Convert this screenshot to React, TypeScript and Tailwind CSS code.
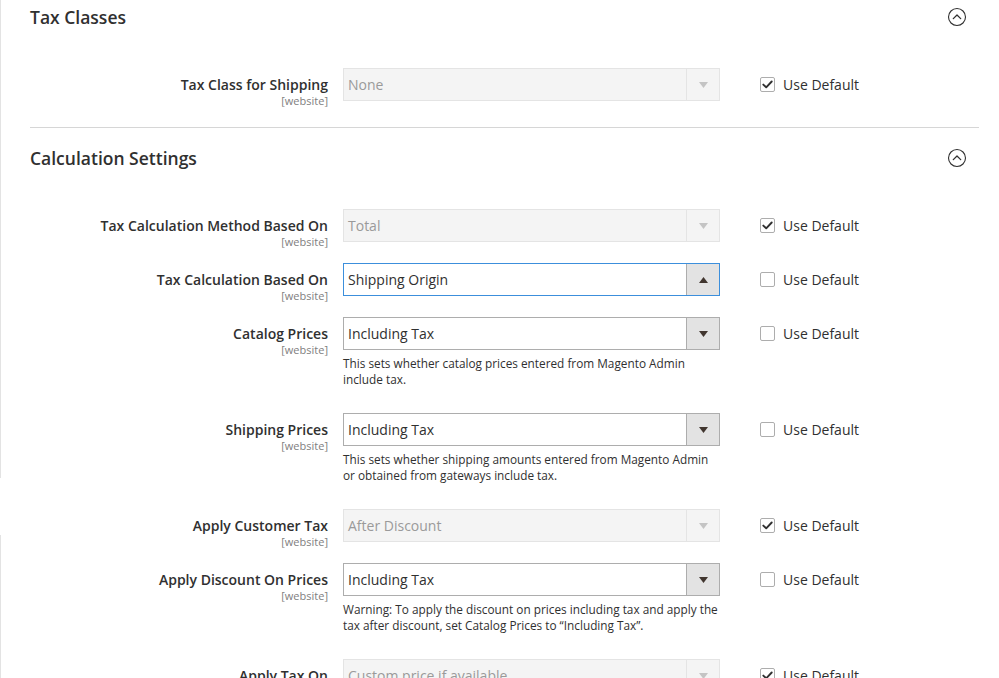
import React from 'react'

type Row = {
  label: string
  value: string
  disabled?: boolean
  focused?: boolean
  checked: boolean
  note?: string
}

const taxRows: Row[] = [
  { label: 'Tax Class for Shipping', value: 'None', disabled: true, checked: true },
]

const calcRows: Row[] = [
  { label: 'Tax Calculation Method Based On', value: 'Total', disabled: true, checked: true },
  { label: 'Tax Calculation Based On', value: 'Shipping Origin', focused: true, checked: false },
  {
    label: 'Catalog Prices',
    value: 'Including Tax',
    checked: false,
    note: 'This sets whether catalog prices entered from Magento Admin include tax.',
  },
  {
    label: 'Shipping Prices',
    value: 'Including Tax',
    checked: false,
    note: 'This sets whether shipping amounts entered from Magento Admin or obtained from gateways include tax.',
  },
  { label: 'Apply Customer Tax', value: 'After Discount', disabled: true, checked: true },
  {
    label: 'Apply Discount On Prices',
    value: 'Including Tax',
    checked: false,
    note: 'Warning: To apply the discount on prices including tax and apply the tax after discount, set Catalog Prices to \u201cIncluding Tax\u201d.',
  },
  { label: 'Apply Tax On', value: 'Custom price if available', disabled: true, checked: true },
]

function CollapseIcon() {
  return (
    <svg width="20" height="20" viewBox="0 0 20 20" fill="none">
      <circle cx="10" cy="10" r="8.5" stroke="#303030" strokeWidth="1.1" />
      <path d="M6.3 11.6 L10 8 L13.7 11.6" stroke="#303030" strokeWidth="1.3" strokeLinecap="round" strokeLinejoin="round" />
    </svg>
  )
}

function Arrow({ up, color }: { up?: boolean; color: string }) {
  return (
    <svg width="9" height="6" viewBox="0 0 9 6">
      {up ? <path d="M0 6 L4.5 0 L9 6 Z" fill={color} /> : <path d="M0 0 L9 0 L4.5 6 Z" fill={color} />}
    </svg>
  )
}

function Select({ row }: { row: Row }) {
  if (row.disabled) {
    return (
      <div className="flex h-[33px] w-[377px] items-stretch border border-[#e4e4e4] bg-[#f4f4f4]">
        <div className="flex flex-1 items-center pl-[4px] text-[14px] text-[#9a9a9a]">{row.value}</div>
        <div className="flex w-[33px] items-center justify-center border-l border-[#e4e4e4]">
          <Arrow color="#c4c4c4" />
        </div>
      </div>
    )
  }
  return (
    <div
      className={
        row.focused
          ? 'flex h-[33px] w-[377px] items-stretch border border-[#3c8fdc] bg-white'
          : 'flex h-[33px] w-[377px] items-stretch border border-[#adadad] bg-white'
      }
    >
      <div className="flex flex-1 items-center pl-[4px] text-[14px] text-[#303030]">{row.value}</div>
      <div className="flex w-[33px] items-center justify-center border-l border-[#adadad] bg-[#e3e3e3]">
        <Arrow up={row.focused} color="#41362f" />
      </div>
    </div>
  )
}

function Checkbox({ checked }: { checked: boolean }) {
  return (
    <div className="flex h-[15px] w-[15px] items-center justify-center rounded-[2px] border border-[#adadad] bg-white">
      {checked && (
        <svg width="11" height="9" viewBox="0 0 11 9" fill="none">
          <path d="M1.3 4.6 L4.2 7.3 L9.7 1.5" stroke="#303030" strokeWidth="1.9" strokeLinecap="round" strokeLinejoin="round" />
        </svg>
      )}
    </div>
  )
}

function FieldRow({ row }: { row: Row }) {
  return (
    <div className={row.note ? 'flex items-start pb-[26px]' : 'flex items-start pb-[21px]'}>
      <div className="h-[33px] w-[298px] shrink-0 pt-[8px] text-right">
        <div className="text-[14px] font-semibold leading-[18px] text-[#303030]">{row.label}</div>
        <div className="text-[11px] leading-[13px] text-[#808080]">[website]</div>
      </div>
      <div className="ml-[15px] w-[377px] shrink-0">
        <Select row={row} />
        {row.note && (
          <p className="mt-[5px] w-[377px] text-[11.8px] leading-[16px] text-[#303030]">{row.note}</p>
        )}
      </div>
      <div className="ml-[40px] flex h-[33px] items-center gap-[8px]">
        <Checkbox checked={row.checked} />
        <span className="text-[14px] text-[#303030]">Use Default</span>
      </div>
    </div>
  )
}

function Section({ title, rows, top, bottom }: { title: string; rows: Row[]; top: string; bottom: string }) {
  return (
    <section className={bottom}>
      <div className={`flex h-[34px] items-center justify-between pr-[12px] ${top}`}>
        <h2 className="text-[17.5px] font-semibold text-[#303030]">{title}</h2>
        <CollapseIcon />
      </div>
      <div className="pt-[34px]">
        {rows.map((row) => (
          <FieldRow key={row.label} row={row} />
        ))}
      </div>
    </section>
  )
}

export default function App() {
  return (
    <div className="flex h-[678px] w-[999px] overflow-hidden bg-white font-['Open_Sans',sans-serif]">
      <div className="flex w-px shrink-0 flex-col">
        <div className="h-[478px] bg-[#e3e3e3]" />
        <div className="h-[57px]" />
        <div className="flex-1 bg-[#e3e3e3]" />
      </div>
      <div className="flex-1 pl-[29px] pr-[20px]">
        <Section title="Tax Classes" rows={taxRows} top="" bottom="pb-[5px]" />
        <div className="border-t border-[#d6d6d6]" />
        <Section title="Calculation Settings" rows={calcRows} top="mt-[13px]" bottom="" />
      </div>
    </div>
  )
}
